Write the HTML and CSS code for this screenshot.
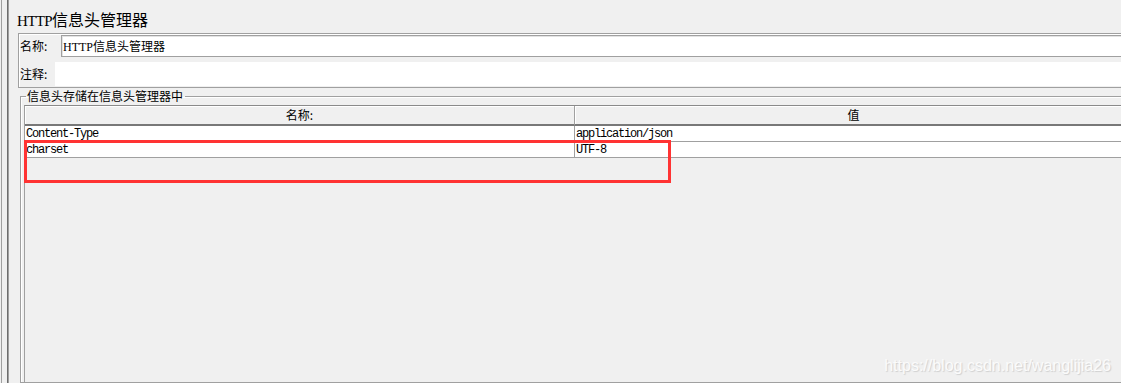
FILE: index.html
```html
<!DOCTYPE html>
<html lang="zh-CN">
<head>
  <meta charset="UTF-8">
  <title>HTTP信息头管理器</title>
  <link rel="stylesheet" href="styles.css">
</head>
<body>
  <div class="app">
    <!-- Left splitter -->
    <div class="splitter"></div>

    <!-- Editor -->
    <main class="editor">
      <div class="title"><span class="latin">HTTP</span>信息头管理器</div>

      <div class="info-panel">
        <div class="field-row name-row">
          <label for="name-input">名称:</label>
          <input type="text" id="name-input" class="name-input" value="HTTP信息头管理器">
        </div>
        <div class="field-row comment-row">
          <label>注释:</label>
          <div class="comment-box"></div>
        </div>
      </div>

      <fieldset class="headers-group">
        <legend>信息头存储在信息头管理器中</legend>
        <div class="table-view">
          <table class="headers-table">
            <thead>
              <tr>
                <th class="col-name">名称:</th>
                <th class="col-value">值</th>
              </tr>
            </thead>
            <tbody>
              <tr>
                <td class="col-name">Content-Type</td>
                <td class="col-value">application/json</td>
              </tr>
              <tr>
                <td class="col-name">charset</td>
                <td class="col-value">UTF-8</td>
              </tr>
            </tbody>
          </table>
        </div>
      </fieldset>
    </main>
  </div>

  <!-- Annotation and watermark -->
  <div class="highlight-box"></div>
  <div class="watermark">https://blog.csdn.net/wanglijia26</div>
</body>
</html>
```

FILE: styles.css
```css
:root {
  --bg: #f0f0f0;
  --line: #a0a0a0;
  --line-dark: #6e6e6e;
  --cjk: "Noto Sans CJK SC", sans-serif;
}

* {
  margin: 0;
  padding: 0;
  box-sizing: border-box;
}

html, body {
  height: 100%;
}

body {
  background: var(--bg);
  font-family: "Liberation Sans", var(--cjk);
  color: #000;
  overflow: hidden;
}

.app {
  display: flex;
  height: 100%;
}

/* Splitter */
.splitter {
  width: 7px;
  margin-left: 1px;
  border-left: 1px solid var(--line);
  border-right: 1px solid var(--line-dark);
  box-shadow: 1px 0 0 var(--line);
  flex-shrink: 0;
}

/* Editor */
.editor {
  flex: 1;
  display: flex;
  flex-direction: column;
  padding-left: 9px;
  margin-right: -12px;
  min-width: 0;
}

.title {
  font-family: var(--cjk);
  font-size: 16px;
  line-height: 20px;
  margin-top: 9px;
  height: 24px;
  white-space: nowrap;
}

.title .latin {
  font-family: "Liberation Serif", serif;
  font-size: 15px;
  letter-spacing: -0.6px;
}

/* Name / comment panel */
.info-panel {
  margin-left: 1px;
  border: 1px solid var(--line);
  box-shadow: inset 1px 1px 0 #fff;
  padding: 1px 0 0 1px;
  height: 55px;
}

.field-row {
  display: flex;
  align-items: center;
}

.field-row label {
  font-family: var(--cjk);
  font-size: 12px;
  line-height: 16px;
  white-space: nowrap;
}

.name-row label {
  width: 41px;
}

.name-input {
  flex: 1;
  height: 22px;
  border: 1px solid var(--line);
  box-shadow: inset 1px 1px 0 #e3e3e3;
  background: #fff;
  padding: 0 0 0 1px;
  font-family: "Liberation Serif", var(--cjk);
  font-size: 12px;
  outline: none;
}

.comment-row {
  margin-top: 5px;
  height: 24px;
}

.comment-row label {
  width: 35px;
}

.comment-box {
  flex: 1;
  height: 24px;
  background: #fff;
}

/* Header table group */
.headers-group {
  flex: 1;
  margin: 1px 0 0 3px;
  border: 1px solid var(--line);
  box-shadow: inset 1px 1px 0 #fff, 1px 1px 0 #fff;
  padding: 0 0 0 3px;
  min-height: 0;
}

.headers-group legend {
  font-family: var(--cjk);
  font-size: 12px;
  line-height: 14px;
  padding: 0 2px 0 1px;
  margin-left: 2px;
}

.table-view {
  height: 100%;
  margin-top: 2px;
  border-left: 1px solid var(--line);
  border-top: 1px solid #8a8a8a;
}

.headers-table {
  width: 100%;
  table-layout: fixed;
  border-collapse: separate;
  border-spacing: 0;
}

.headers-table th {
  height: 20px;
  font-family: var(--cjk);
  font-size: 12px;
  font-weight: normal;
  line-height: 14px;
  background: var(--bg);
  border-bottom: 2px solid #787878;
  box-shadow: inset 1px 1px 0 #fff;
  text-align: center;
  vertical-align: middle;
}

.headers-table th.col-name {
  width: 550px;
  border-right: 1px solid var(--line);
}

.headers-table td {
  height: 16px;
  background: #fff;
  border-bottom: 1px solid var(--line);
  font-family: "Liberation Mono", monospace;
  font-size: 12px;
  letter-spacing: -1.2px;
  line-height: 13px;
  padding: 2px 0 0 1px;
  vertical-align: top;
  white-space: nowrap;
}

.headers-table td.col-name {
  border-right: 1px solid var(--line);
}

/* Red annotation over the charset row */
.highlight-box {
  position: absolute;
  left: 24px;
  top: 140px;
  width: 647px;
  height: 43px;
  border: 3px solid #ff3333;
}

/* Blog watermark */
.watermark {
  position: absolute;
  right: 10px;
  bottom: 8px;
  font-family: "Liberation Sans", sans-serif;
  font-size: 16px;
  color: #fbfbfb;
  text-shadow: 1px 1px 1px #cfcfcf;
}
```
